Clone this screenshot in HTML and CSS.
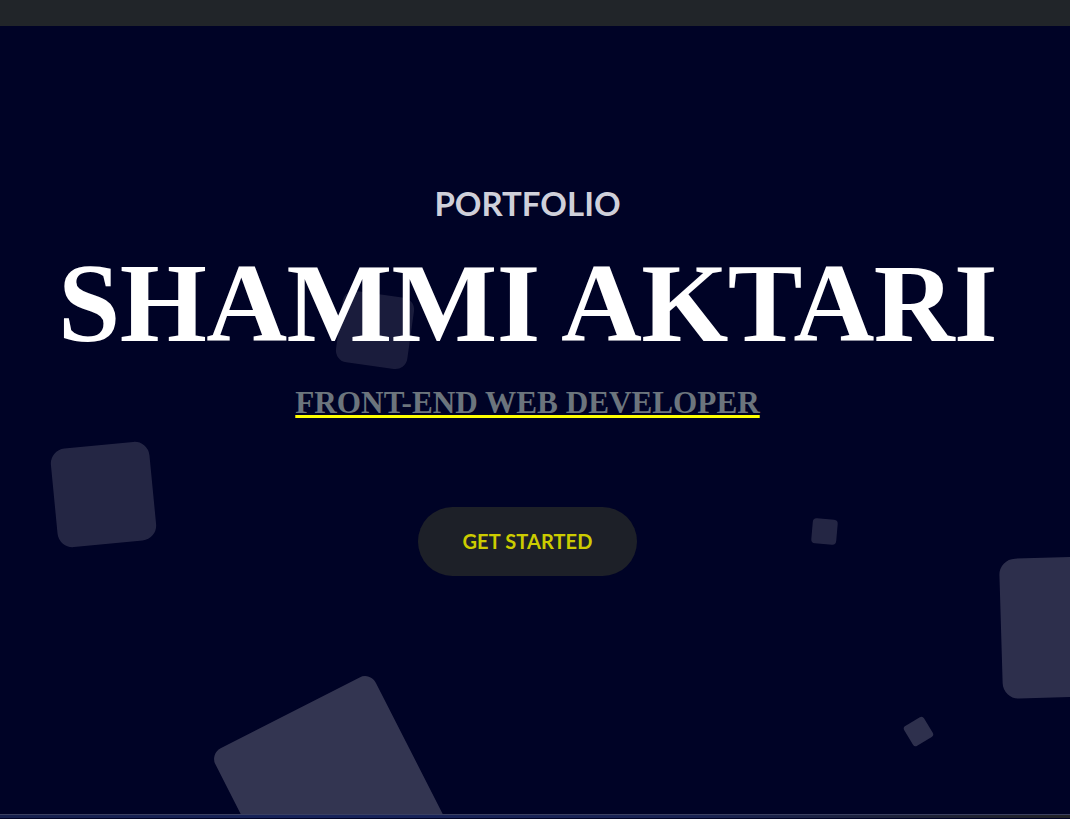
FILE: index.html
```html
<!DOCTYPE html>
<html lang="en">
<head>
<meta charset="utf-8">
<title>Shammi Aktari - Portfolio</title>
<link rel="stylesheet" href="styles.css">
</head>
<body>
  <nav class="topbar"></nav>
  <section class="hero">
    <ul class="shapes">
      <li class="shape s1"></li>
      <li class="shape s2"></li>
      <li class="shape s3"></li>
      <li class="shape s4"></li>
      <li class="shape s5"></li>
      <li class="shape s6"></li>
    </ul>
    <div class="hero-content">
      <p class="eyebrow">PORTFOLIO</p>
      <h1 class="name">SHAMMI AKTARI</h1>
      <h2 class="role">FRONT-END WEB DEVELOPER</h2>
      <a class="cta" href="#">GET STARTED</a>
    </div>
  </section>
  <div class="next-strip"></div>
</body>
</html>
```
FILE: styles.css
```css
* { box-sizing: border-box; }

html, body {
  margin: 0;
  padding: 0;
  height: 819px;
  overflow: hidden;
}

body {
  background: #000326;
  font-family: "Lato", "Open Sans", sans-serif;
}

.topbar {
  height: 26px;
  background: #212529;
}

.hero {
  position: relative;
  height: 789px;
  background: #000326;
  border-bottom: 1px solid #3b4060;
  overflow: hidden;
}

.shapes {
  list-style: none;
  margin: 0;
  padding: 0;
}

.shape {
  position: absolute;
  background: rgba(255, 255, 255, 0.14);
}

.s1 { left: 339px; top: 268px; width: 72px; height: 72px; border-radius: 12px; transform: rotate(8deg); background: rgba(255,255,255,0.1); }
.s2 { left: 54px; top: 419px; width: 99px; height: 99px; border-radius: 15px; transform: rotate(-5.5deg); }
.s3 { left: 812px; top: 493px; width: 25px; height: 25px; border-radius: 4px; transform: rotate(5deg); }
.s4 { left: 1001px; top: 531px; width: 140px; height: 140px; border-radius: 16px; transform: rotate(-1.7deg); background: rgba(255,255,255,0.175); }
.s5 { left: 907px; top: 694px; width: 23px; height: 23px; border-radius: 3px; transform: rotate(-31deg); background: rgba(255,255,255,0.18); }
.s6 { left: 241px; top: 677px; width: 180px; height: 180px; border-radius: 12px; transform: rotate(-27deg); background: rgba(255,255,255,0.2); }

.hero-content {
  position: relative;
  display: flex;
  flex-direction: column;
  align-items: center;
  padding-top: 161px;
  padding-right: 15px;
  text-align: center;
}

.eyebrow {
  margin: 0;
  font-family: "Lato", sans-serif;
  font-weight: 700;
  font-size: 33px;
  line-height: 33px;
  color: #cfd0da;
}

.name {
  margin: 27px 0 0;
  font-family: "Liberation Serif", "Times New Roman", serif;
  font-weight: 700;
  font-size: 112px;
  line-height: 1;
  letter-spacing: -0.6px;
  color: #ffffff;
  white-space: nowrap;
}

.role {
  margin: 28px 0 0;
  font-family: "Liberation Serif", "Times New Roman", serif;
  font-weight: 700;
  font-size: 31.2px;
  line-height: 1;
  color: #6c757d;
  text-decoration: underline;
  text-decoration-color: #ffff00;
  text-decoration-thickness: 3px;
  text-underline-offset: 2px;
}

.cta {
  margin-top: 89px;
  display: inline-block;
  height: 69px;
  line-height: 69px;
  padding: 0 44px;
  border-radius: 35px;
  background: #1d2028;
  color: #cccc00;
  font-family: "Lato", sans-serif;
  font-weight: 700;
  font-size: 20px;
  letter-spacing: 0.1px;
  text-decoration: none;
}

.next-strip {
  height: 3px;
  background: linear-gradient(90deg, #151f4c 0%, #17235a 30%, #182252 65%, #202126 100%);
}
```
